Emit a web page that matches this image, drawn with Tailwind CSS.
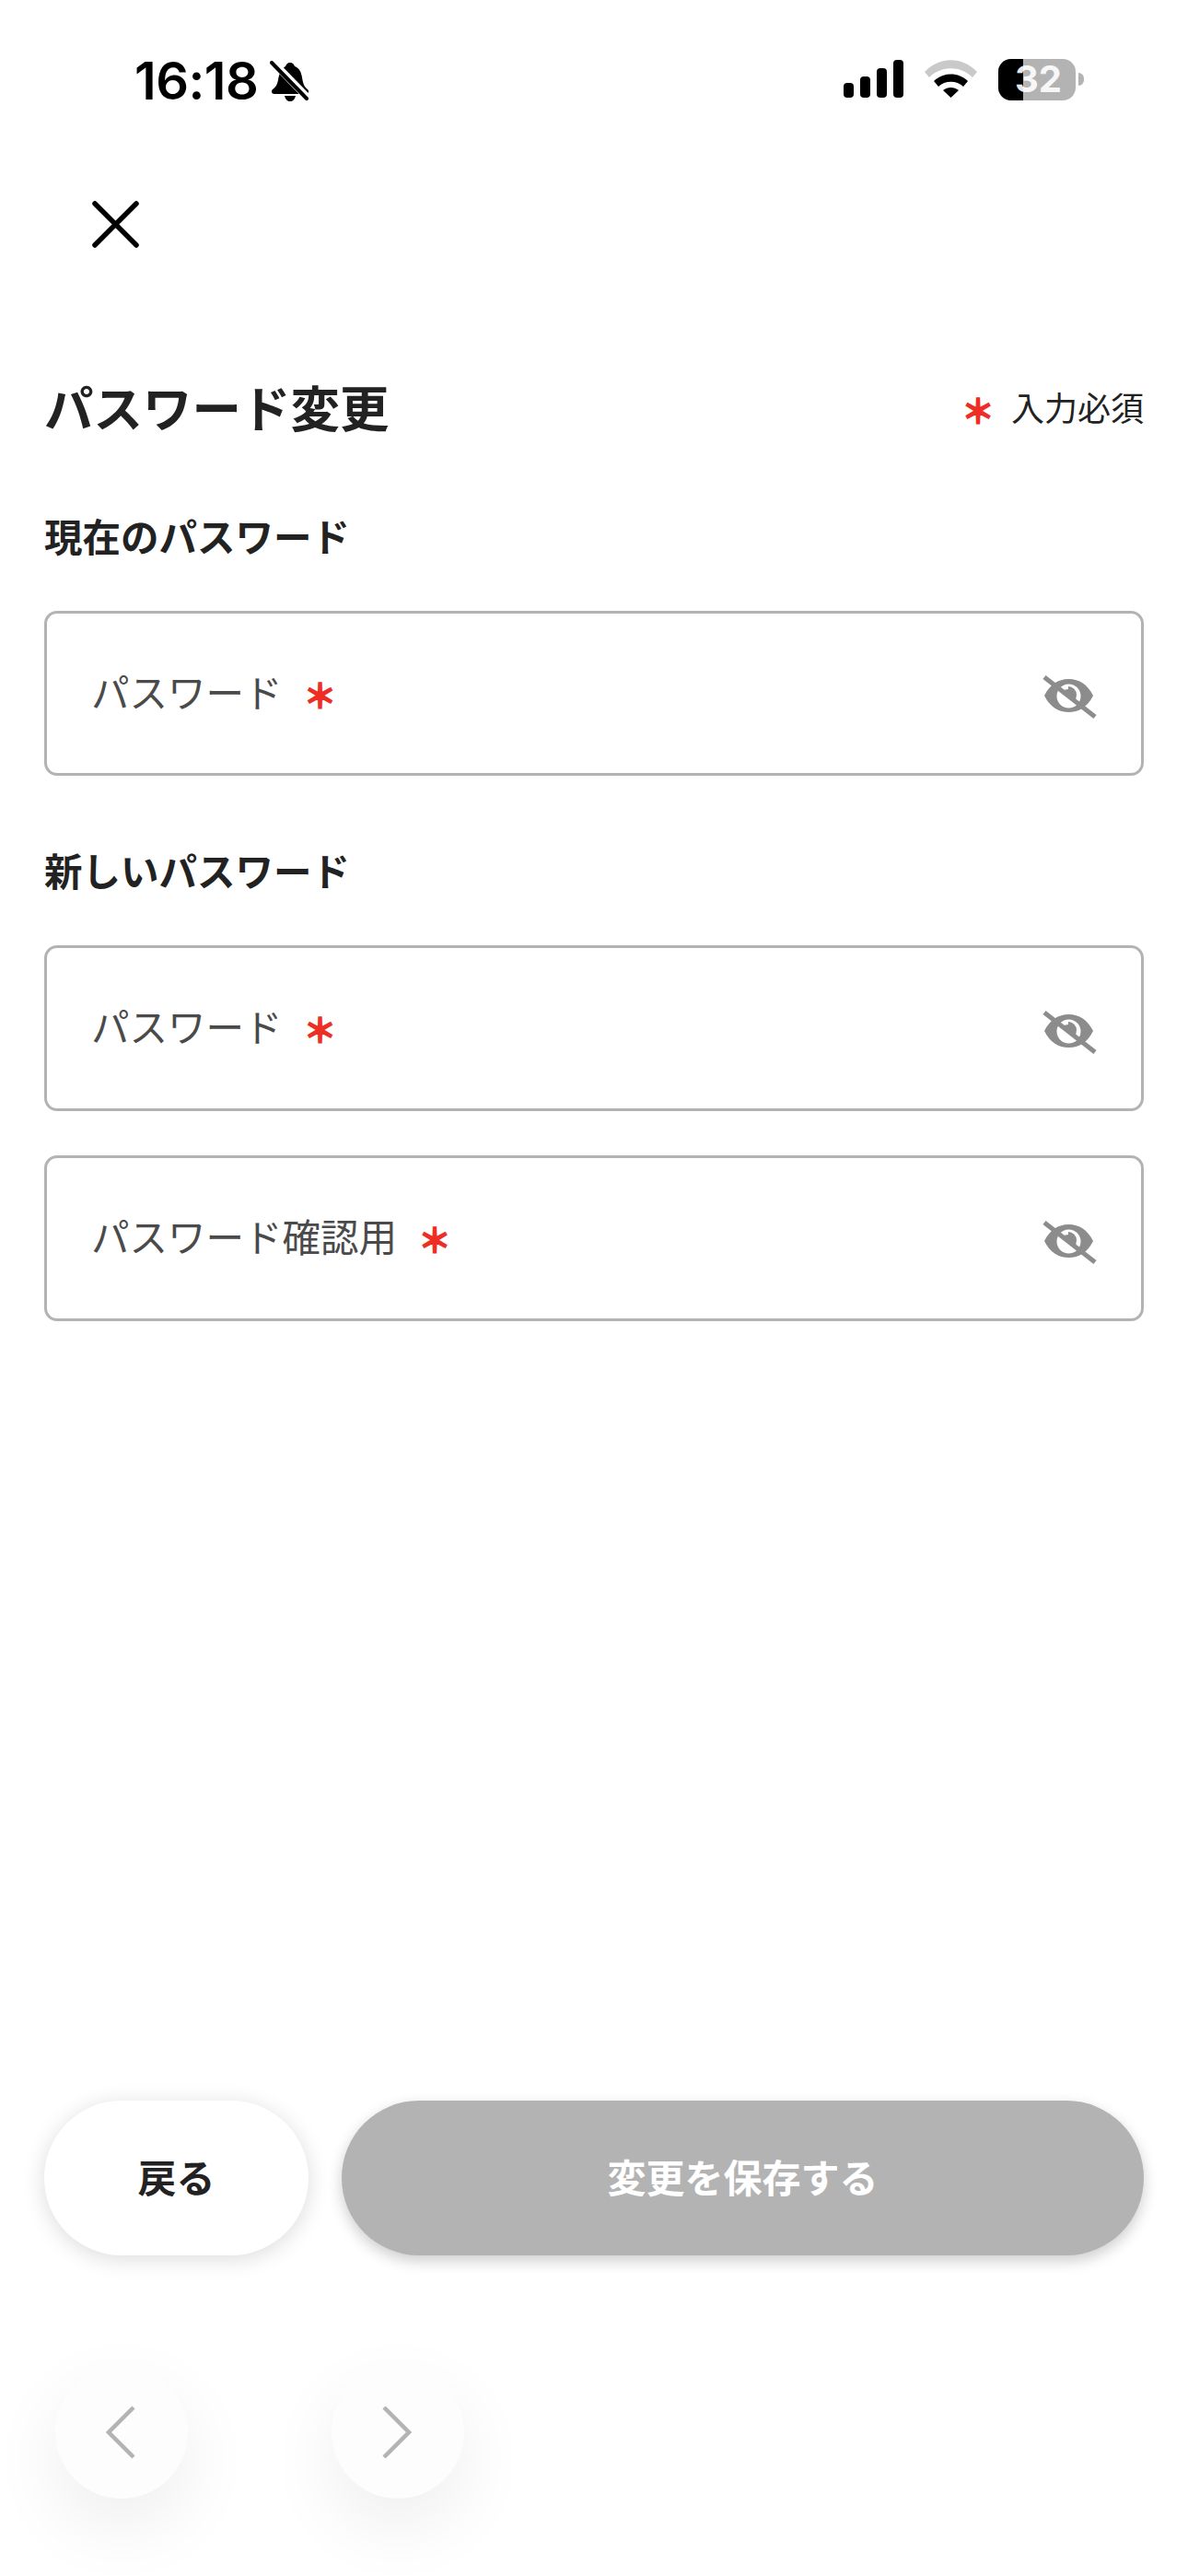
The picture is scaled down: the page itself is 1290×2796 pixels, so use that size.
<!DOCTYPE html>
<html lang="ja">
<head>
<meta charset="utf-8">
<script src="https://cdn.jsdelivr.net/npm/@tailwindcss/browser@4"></script>
</head>
<body class="bg-white font-['Noto_Sans_CJK_JP','Noto_Sans',sans-serif] text-[#222222]">
<div class="w-[1290px] h-[2796px] flex flex-col overflow-hidden">

  <!-- status bar -->
  <div class="h-[176px] pl-[146px] pr-[113px] pt-[60px] flex justify-between items-start shrink-0">
    <div class="flex items-center gap-[13px] h-[56px]">
      <span class="font-['Inter',sans-serif] font-semibold text-[56px] leading-[56px] text-black tracking-[-0.5px]">16:18</span>
      <svg class="w-[44px] h-[44px]" viewBox="0 0 44 44">
        <path d="M22 2c3 0 4 2 5 4 5 2 7 6 8 12 1 6 2 10 6 13 2 2 1 5-2 5H5c-3 0-4-3-2-5 3-2 5-5 6-10 1-7 3-12 8-15 1-2 2-4 5-4z" fill="#000"/>
        <path d="M16 38h12c-1 4-3 6-6 6s-5-2-6-6z" fill="#000"/>
        <path d="M5 3l37 38" stroke="#fff" stroke-width="8"/>
        <path d="M2 2l38 39" stroke="#000" stroke-width="4" stroke-linecap="round"/>
      </svg>
    </div>
    <div class="flex items-center gap-[23px] h-[50px]">
      <svg class="w-[65px] h-[41px]" viewBox="0 0 65 41" fill="#000">
        <rect x="0" y="25" width="11" height="16" rx="4"/>
        <rect x="18" y="18" width="11" height="23" rx="4"/>
        <rect x="36" y="9" width="11" height="32" rx="4"/>
        <rect x="54" y="0" width="11" height="41" rx="4"/>
      </svg>
      <svg class="w-[57px] h-[41px]" viewBox="0 0 57 41">
        <path d="M0 13C16-4 41-4 57 13l-5 6C39 6 18 6 5 19z" fill="#c9c9c9"/>
        <path d="M10 23c10-10 27-10 37 0l-5 6c-7-7-20-7-27 0z" fill="#000"/>
        <path d="M20 33c5-4 12-4 17 0l-8.500 8z" fill="#000"/>
      </svg>
      <div class="flex items-center gap-[3px] mt-[2px]">
        <div class="relative w-[84px] h-[45px] rounded-[14px] bg-[#b3b3b3]">
          <div class="w-[27px] h-full rounded-l-[14px] bg-black"></div>
          <span class="absolute left-[18px] top-[2px] font-['Inter',sans-serif] font-bold text-[40px] leading-[40px] text-white/90">32</span>
        </div>
        <div class="w-[6px] h-[14px] rounded-r-full bg-[#b3b3b3]"></div>
      </div>
    </div>
  </div>

  <!-- close -->
  <div class="h-[235px] pl-[100px] pt-[42px] shrink-0">
    <svg class="w-[51px] h-[51px]" viewBox="0 0 51 51" fill="none" stroke="#000" stroke-width="5.500" stroke-linecap="round">
      <path d="M3 3l45 45M48 3L3 48"/>
    </svg>
  </div>

  <div class="px-[48px] flex flex-col">
    <div class="flex justify-between items-center h-[60px]">
      <h1 class="text-[53.500px] leading-[60px] font-bold">パスワード変更</h1>
      <div class="flex items-center gap-[18px]">
        <span class="text-[#ee2e24] text-[36px] leading-[40px] font-bold mt-[6px] [-webkit-text-stroke:1.500px_#ee2e24]">＊</span>
        <span class="text-[36px] leading-[40px] font-normal">入力必須</span>
      </div>
    </div>

    <h2 class="mt-[80px] text-[41.500px] leading-[60px] font-bold">現在のパスワード</h2>
    <div class="mt-[52px] h-[179px] border-[3px] border-[#b3b3b3] rounded-[14px] pl-[48px] pr-[48px] flex items-center justify-between">
      <div class="flex items-center gap-[23px] mb-[6px]">
        <span class="text-[41.500px] leading-[50px] font-normal text-[#4a4a4a]">パスワード</span>
        <span class="text-[#ee2e24] text-[36px] leading-[40px] font-bold mt-[6px] [-webkit-text-stroke:1.500px_#ee2e24]">＊</span>
      </div>
      <svg class="w-[60px] h-[50px] mt-[7px]" viewBox="0 0 60 50">
        <path fill-rule="evenodd" d="M29.500 6C41 6 50 12 56 24 50 36 41 42 29.500 42S9 36 3 24C9 12 18 6 29.500 6zm0 5.500a13 13 0 1 0 0 26 13 13 0 0 0 0-26z" fill="#8c8c8c"/>
        <path d="M29 14a9 9 0 0 1 9 9l-1 6-13-11 5-1z" fill="#8c8c8c"/>
        <path d="M3 4l55 43" stroke="#8c8c8c" stroke-width="5"/>
      </svg>
    </div>

    <h2 class="mt-[72px] text-[41.500px] leading-[60px] font-bold">新しいパスワード</h2>
    <div class="mt-[52px] h-[180px] border-[3px] border-[#b3b3b3] rounded-[14px] pl-[48px] pr-[48px] flex items-center justify-between">
      <div class="flex items-center gap-[23px] mb-[6px]">
        <span class="text-[41.500px] leading-[50px] font-normal text-[#4a4a4a]">パスワード</span>
        <span class="text-[#ee2e24] text-[36px] leading-[40px] font-bold mt-[6px] [-webkit-text-stroke:1.500px_#ee2e24]">＊</span>
      </div>
      <svg class="w-[60px] h-[50px] mt-[7px]" viewBox="0 0 60 50">
        <path fill-rule="evenodd" d="M29.500 6C41 6 50 12 56 24 50 36 41 42 29.500 42S9 36 3 24C9 12 18 6 29.500 6zm0 5.500a13 13 0 1 0 0 26 13 13 0 0 0 0-26z" fill="#8c8c8c"/>
        <path d="M29 14a9 9 0 0 1 9 9l-1 6-13-11 5-1z" fill="#8c8c8c"/>
        <path d="M3 4l55 43" stroke="#8c8c8c" stroke-width="5"/>
      </svg>
    </div>
    <div class="mt-[48px] h-[180px] border-[3px] border-[#b3b3b3] rounded-[14px] pl-[48px] pr-[48px] flex items-center justify-between">
      <div class="flex items-center gap-[23px] mb-[6px]">
        <span class="text-[41.500px] leading-[50px] font-normal text-[#4a4a4a]">パスワード確認用</span>
        <span class="text-[#ee2e24] text-[36px] leading-[40px] font-bold mt-[6px] [-webkit-text-stroke:1.500px_#ee2e24]">＊</span>
      </div>
      <svg class="w-[60px] h-[50px] mt-[7px]" viewBox="0 0 60 50">
        <path fill-rule="evenodd" d="M29.500 6C41 6 50 12 56 24 50 36 41 42 29.500 42S9 36 3 24C9 12 18 6 29.500 6zm0 5.500a13 13 0 1 0 0 26 13 13 0 0 0 0-26z" fill="#8c8c8c"/>
        <path d="M29 14a9 9 0 0 1 9 9l-1 6-13-11 5-1z" fill="#8c8c8c"/>
        <path d="M3 4l55 43" stroke="#8c8c8c" stroke-width="5"/>
      </svg>
    </div>
  </div>

  <!-- actions -->
  <div class="mt-auto px-[48px] flex gap-[36px]">
    <button class="w-[287px] h-[168px] pb-[6px] rounded-full bg-white text-[42px] font-bold shadow-[0_4px_24px_rgba(0,0,0,0.14)]">戻る</button>
    <button class="flex-1 h-[168px] pb-[6px] rounded-full bg-[#b3b3b3] text-white text-[42px] font-bold shadow-[0_6px_16px_rgba(0,0,0,0.2)]">変更を保存する</button>
  </div>

  <!-- browser nav -->
  <div class="mt-[120px] mb-[84px] pl-[60px] flex gap-[156px]">
    <div class="w-[144px] h-[144px] pr-[3px] rounded-full bg-[#fdfdfd] shadow-[0_30px_80px_rgba(0,0,0,0.07)] flex items-center justify-center">
      <svg class="w-[34px] h-[58px]" viewBox="0 0 34 58" fill="none" stroke="#b3b3b3" stroke-width="4.500">
        <path d="M31 2L4 29l27 27"/>
      </svg>
    </div>
    <div class="w-[144px] h-[144px] pr-[3px] rounded-full bg-[#fdfdfd] shadow-[0_30px_80px_rgba(0,0,0,0.07)] flex items-center justify-center">
      <svg class="w-[34px] h-[58px]" viewBox="0 0 34 58" fill="none" stroke="#b3b3b3" stroke-width="4.500">
        <path d="M3 2l27 27L3 56"/>
      </svg>
    </div>
  </div>
</div>
</body>
</html>
